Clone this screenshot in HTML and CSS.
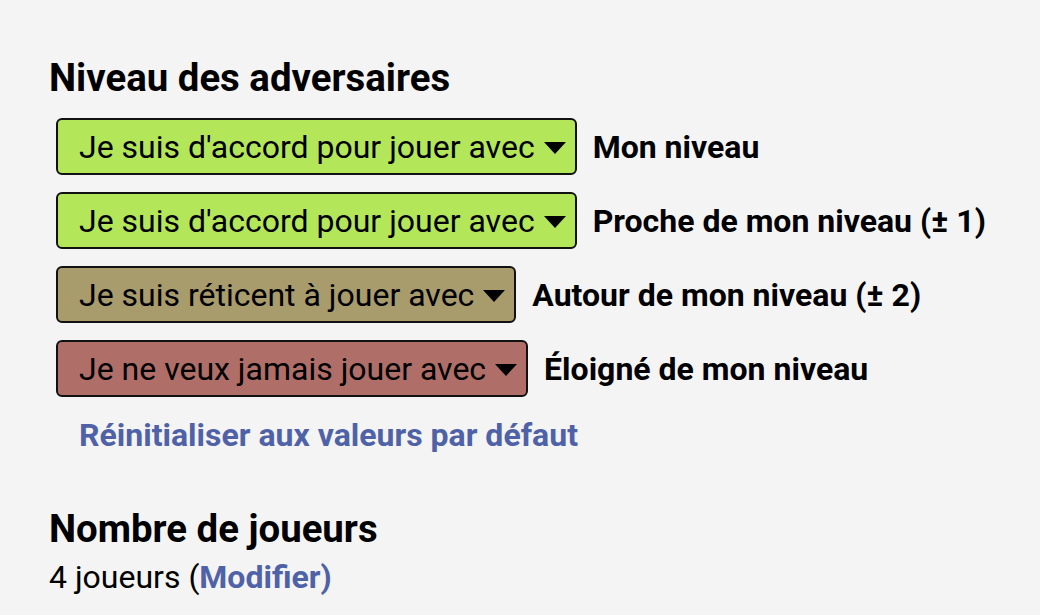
FILE: index.html
```html
<!DOCTYPE html>
<html lang="fr">
<head>
<meta charset="utf-8">
<link rel="stylesheet" href="styles.css">
</head>
<body>
<main class="page">
  <section class="section">
    <h2 class="title">Niveau des adversaires</h2>
    <div class="rows">
      <div class="row">
        <div class="select ok"><span class="select-text">Je suis d'accord pour jouer avec</span><span class="arrow"></span></div>
        <span class="label">Mon niveau</span>
      </div>
      <div class="row">
        <div class="select ok"><span class="select-text">Je suis d'accord pour jouer avec</span><span class="arrow"></span></div>
        <span class="label">Proche de mon niveau (± 1)</span>
      </div>
      <div class="row">
        <div class="select meh"><span class="select-text">Je suis réticent à jouer avec</span><span class="arrow"></span></div>
        <span class="label">Autour de mon niveau (± 2)</span>
      </div>
      <div class="row">
        <div class="select no"><span class="select-text">Je ne veux jamais jouer avec</span><span class="arrow"></span></div>
        <span class="label">Éloigné de mon niveau</span>
      </div>
    </div>
    <a class="reset" href="#">Réinitialiser aux valeurs par défaut</a>
  </section>
  <section class="section players">
    <h2 class="title">Nombre de joueurs</h2>
    <p class="text">4 joueurs (<a class="link" href="#">Modifier)</a></p>
  </section>
</main>
</body>
</html>
```
FILE: styles.css
```css
html, body {
  margin: 0;
  padding: 0;
  background: #f4f4f4;
}
body {
  font-family: Roboto, "Liberation Sans", sans-serif;
  color: #000;
}
.page {
  padding: 54px 0 0 49px;
}
.title {
  margin: 0;
  font-size: 38.4px;
  font-weight: 700;
  line-height: 48px;
}
.rows {
  display: flex;
  flex-direction: column;
  gap: 17px;
  margin: 16px 0 0 7px;
}
.row {
  display: flex;
  align-items: center;
  gap: 16px;
}
.select {
  display: flex;
  align-items: center;
  height: 57px;
  box-sizing: border-box;
  border: 2px solid #111;
  border-radius: 6px;
  padding: 0 9px 0 21px;
  font-size: 32px;
}
.select-text {
  margin-right: 9px;
}
.arrow {
  width: 0;
  height: 0;
  border-left: 11px solid transparent;
  border-right: 11px solid transparent;
  border-top: 12px solid #000;
  margin-top: 2px;
}
.ok { background: #b4e65a; }
.meh { background: #a89b6c; }
.no { background: #b06e68; }
.label {
  font-size: 32px;
  font-weight: 700;
}
.reset {
  display: inline-block;
  margin: 19px 0 0 30px;
  font-size: 32px;
  font-weight: 700;
  color: #4f62a8;
  text-decoration: none;
}
.players {
  margin-top: 51px;
}
.text {
  margin: 5px 0 0;
  font-size: 32px;
}
.link {
  color: #4f62a8;
  font-weight: 700;
  text-decoration: none;
}
```
